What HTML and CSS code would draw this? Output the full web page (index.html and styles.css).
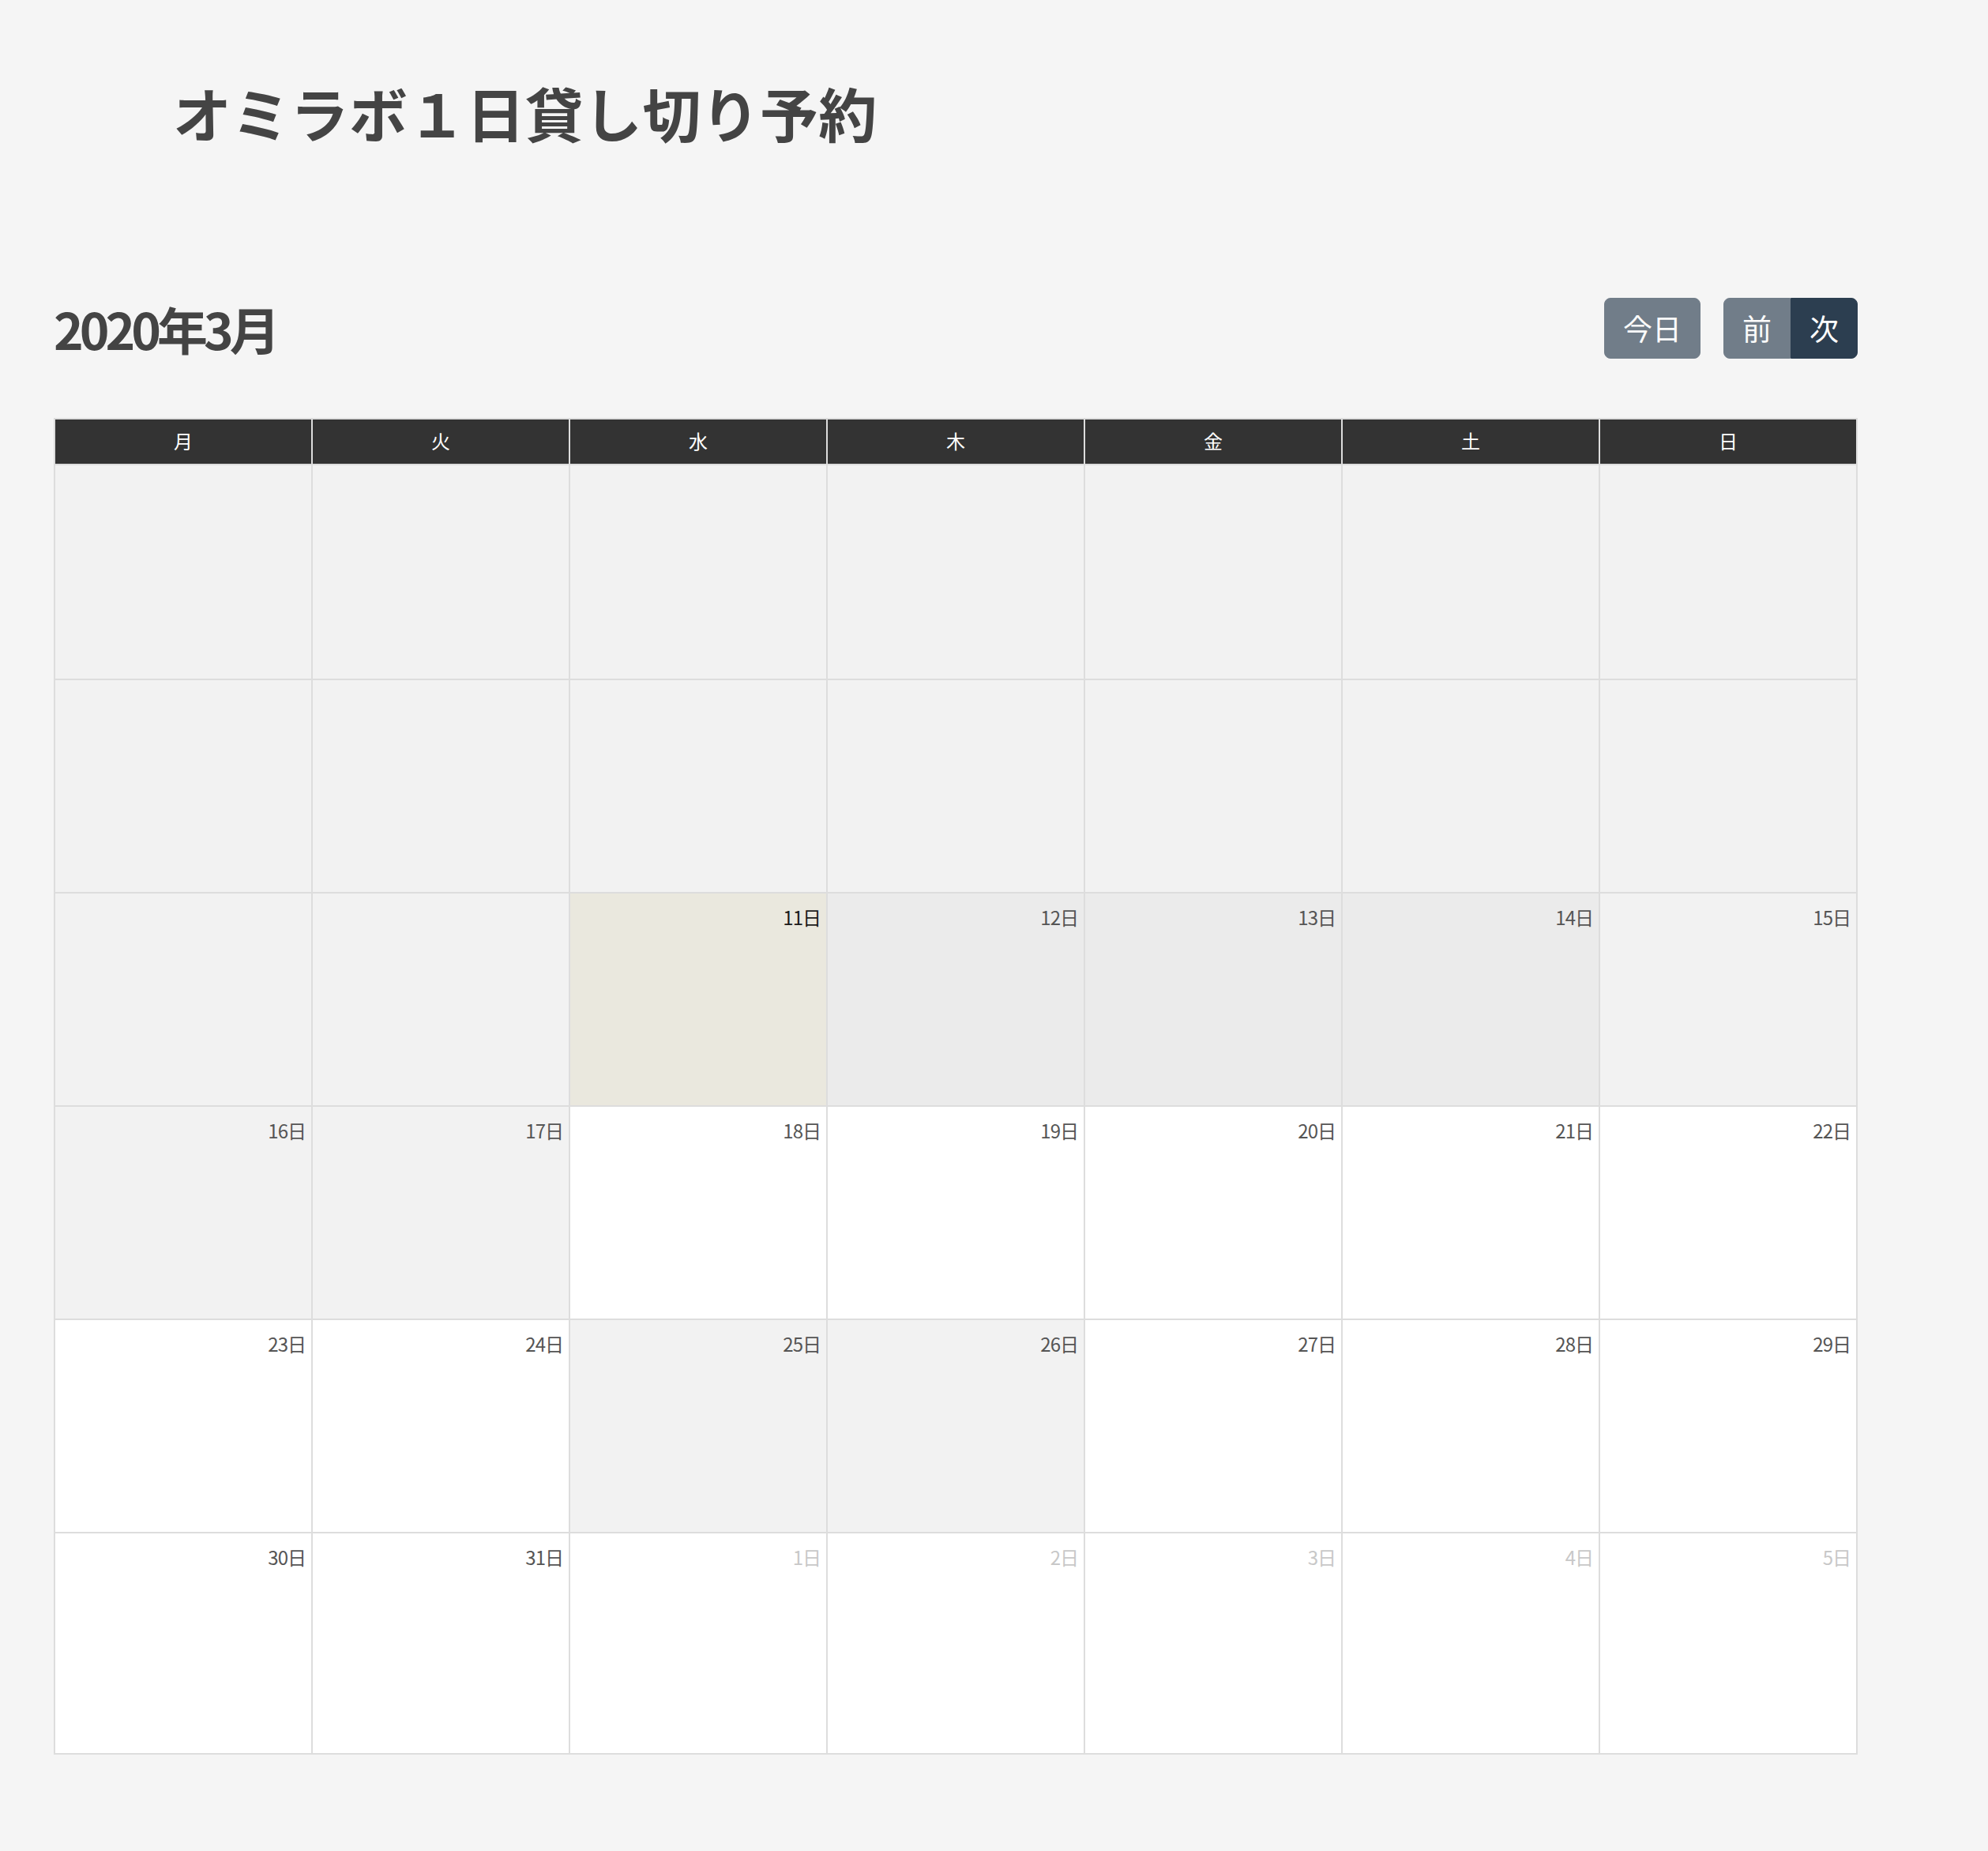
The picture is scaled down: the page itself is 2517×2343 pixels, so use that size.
FILE: index.html
```html
<!DOCTYPE html>
<html lang="ja">
<head>
    <meta charset="utf-8">
    <title>オミラボ１日貸し切り予約</title>
    <link rel="stylesheet" href="styles.css">
</head>
<body>
<div class="page">
    <h1 class="page-title">オミラボ１日貸し切り予約</h1>

    <div class="calendar">
        <div class="toolbar">
            <h2 class="toolbar-title">2020年3月</h2>
            <div class="toolbar-buttons">
                <button type="button" class="btn" disabled>今日</button>
                <div class="btn-group">
                    <button type="button" class="btn" disabled>前</button>
                    <button type="button" class="btn">次</button>
                </div>
            </div>
        </div>

        <div class="month">
            <div class="head">月</div>
            <div class="head">火</div>
            <div class="head">水</div>
            <div class="head">木</div>
            <div class="head">金</div>
            <div class="head">土</div>
            <div class="head">日</div>

            <!-- 1週目 -->
            <div class="day off"></div>
            <div class="day off"></div>
            <div class="day off"></div>
            <div class="day off"></div>
            <div class="day off"></div>
            <div class="day off"></div>
            <div class="day off"></div>

            <!-- 2週目 -->
            <div class="day off"></div>
            <div class="day off"></div>
            <div class="day off"></div>
            <div class="day off"></div>
            <div class="day off"></div>
            <div class="day off"></div>
            <div class="day off"></div>

            <!-- 3週目 -->
            <div class="day off"></div>
            <div class="day off"></div>
            <div class="day today"><span class="num">11日</span></div>
            <div class="day booked"><span class="num">12日</span></div>
            <div class="day booked"><span class="num">13日</span></div>
            <div class="day booked"><span class="num">14日</span></div>
            <div class="day off"><span class="num">15日</span></div>

            <!-- 4週目 -->
            <div class="day off"><span class="num">16日</span></div>
            <div class="day off"><span class="num">17日</span></div>
            <div class="day"><span class="num">18日</span></div>
            <div class="day"><span class="num">19日</span></div>
            <div class="day"><span class="num">20日</span></div>
            <div class="day"><span class="num">21日</span></div>
            <div class="day"><span class="num">22日</span></div>

            <!-- 5週目 -->
            <div class="day"><span class="num">23日</span></div>
            <div class="day"><span class="num">24日</span></div>
            <div class="day off"><span class="num">25日</span></div>
            <div class="day off"><span class="num">26日</span></div>
            <div class="day"><span class="num">27日</span></div>
            <div class="day"><span class="num">28日</span></div>
            <div class="day"><span class="num">29日</span></div>

            <!-- 6週目 -->
            <div class="day"><span class="num">30日</span></div>
            <div class="day"><span class="num">31日</span></div>
            <div class="day other"><span class="num">1日</span></div>
            <div class="day other"><span class="num">2日</span></div>
            <div class="day other"><span class="num">3日</span></div>
            <div class="day other"><span class="num">4日</span></div>
            <div class="day other"><span class="num">5日</span></div>
        </div>
    </div>
</div>
</body>
</html>
```

FILE: styles.css
```css
body {
    margin: 0;
    background-color: #f5f5f5;
    color: #444;
    font-family: "Noto Sans CJK JP", "Noto Sans", sans-serif;
}

.page { padding: 92px 0 120px 68px; }

.page-title {
    margin: 0 0 185px 151px;
    font-size: 74px;
    line-height: 100px;
    font-weight: 700;
    letter-spacing: .3px;
    color: #444;
}

.calendar { width: 2284px; }

/* ツールバー */
.toolbar {
    display: flex;
    align-items: center;
    justify-content: space-between;
    height: 77px;
    margin-bottom: 75px;
}
.toolbar-title {
    margin: 0;
    font-size: 64px;
    line-height: 77px;
    font-weight: 700;
    letter-spacing: -5px;
    color: #444;
}
.toolbar-buttons { display: flex; gap: 29px; }
.btn-group { display: flex; }

.btn {
    padding: 10px 23px;
    border: 1px solid #2c3e50;
    border-radius: 8px;
    background-color: #2c3e50;
    color: #fff;
    font-family: inherit;
    font-size: 37px;
    line-height: 55px;
}
.btn:disabled { opacity: .65; }
.btn-group .btn:first-child { border-radius: 8px 0 0 8px; }
.btn-group .btn:last-child { border-radius: 0 8px 8px 0; }

/* 月表示 */
.month {
    display: grid;
    grid-template-columns: repeat(7, 1fr);
    grid-template-rows: 58px 272px 270px 270px 270px 270px 280px;
    border-top: 2px solid #ddd;
    border-left: 2px solid #ddd;
}
.head, .day {
    border-right: 2px solid #ddd;
    border-bottom: 2px solid #ddd;
}
.head {
    background-color: #333;
    color: #fff;
    font-size: 24px;
    line-height: 54px;
    text-align: center;
}
.day {
    background-color: #fff;
    padding: 12px 7px 0 0;
    text-align: right;
    font-size: 24px;
    line-height: 36px;
    letter-spacing: -1px;
    color: #555;
}
.day.off { background-color: #f2f2f2; }
.day.booked { background-color: #ebebeb; }
.day.today { background-color: #eae8de; color: #1a1a1a; }
.day.other { color: #c8c8c8; }
```
